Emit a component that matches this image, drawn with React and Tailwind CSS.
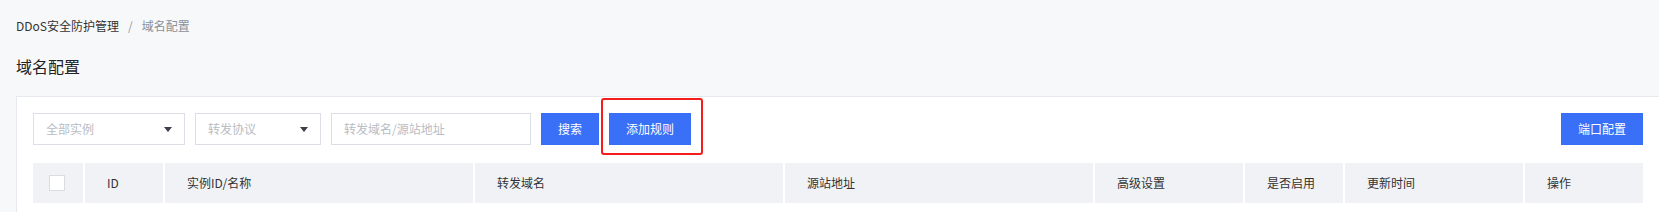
import React from 'react';

const FONT = { fontFamily: '"Noto Sans CJK SC", "Noto Sans", sans-serif' };

const COLUMNS = [
  { key: 'id', label: 'ID', width: 'w-[80px]' },
  { key: 'name', label: '实例ID/名称', width: 'w-[310px]' },
  { key: 'domain', label: '转发域名', width: 'w-[310px]' },
  { key: 'origin', label: '源站地址', width: 'w-[310px]' },
  { key: 'advanced', label: '高级设置', width: 'w-[150px]' },
  { key: 'enabled', label: '是否启用', width: 'w-[100px]' },
  { key: 'updated', label: '更新时间', width: 'w-[180px]' },
  { key: 'ops', label: '操作', width: 'w-[120px]' }
];

const Select = ({ placeholder, width }) => (
  <div className={`${width} h-8 flex items-center justify-between border border-[#dcdfe6] bg-white pl-3 pr-3`}>
    <span className="text-[12px] text-[#b8bcc4]">{placeholder}</span>
    <span className="w-0 h-0 border-l-[4px] border-r-[4px] border-t-[5px] border-l-transparent border-r-transparent border-t-[#3a3f4b]" />
  </div>
);

const Button = ({ children, width }) => (
  <button className={`${width} h-8 bg-[#3a6ff8] text-white text-[12px] flex items-center justify-center`}>
    {children}
  </button>
);

export default function App() {
  return (
    <div className="w-full h-[212px] overflow-hidden bg-[#f7f8fa] pl-4" style={FONT}>
      <div className="h-[52px] flex items-center text-[12px]">
        <span className="text-[#333]">DDoS安全防护管理</span>
        <span className="mx-[9px] text-[#999]">/</span>
        <span className="text-[#8a8f99]">域名配置</span>
      </div>
      <div className="h-7 flex items-center text-[16px] text-[#222]">域名配置</div>

      <div className="mt-4 bg-white border-l border-t border-[#e6e9ee] pl-4 pr-4 pt-4 pb-6">
        <div className="flex items-center gap-[10px] h-8">
          <Select placeholder="全部实例" width="w-[152px]" />
          <Select placeholder="转发协议" width="w-[126px]" />
          <div className="w-[200px] h-8 flex items-center border border-[#dcdfe6] pl-3">
            <span className="text-[12px] text-[#b8bcc4]">转发域名/源站地址</span>
          </div>
          <Button width="w-[58px]">搜索</Button>
          <span className="relative">
            <Button width="w-[82px]">添加规则</Button>
            <span className="absolute -left-2 -top-[15px] -right-3 -bottom-[10px] border-2 border-[#f51c1c] rounded-[3px] pointer-events-none" />
          </span>
          <div className="ml-auto">
            <Button width="w-[82px]">端口配置</Button>
          </div>
        </div>

        <div className="mt-[18px] h-10 flex bg-[#f0f2f6] text-[12px] text-[#333]">
          <div className="w-[50px] flex items-center pl-4">
            <span className="w-4 h-4 bg-white border border-[#d9dce2]" />
          </div>
          {COLUMNS.map((col) => (
            <div
              key={col.key}
              className={`${col.width} flex items-center border-l-2 border-white pl-[22px]`}
            >
              {col.label}
            </div>
          ))}
        </div>
      </div>
    </div>
  );
}
